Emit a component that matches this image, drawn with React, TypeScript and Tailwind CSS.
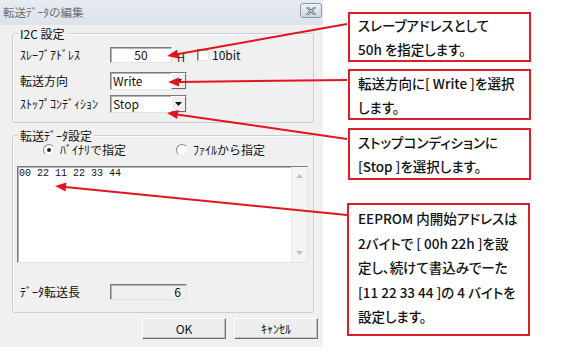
import React from "react";

const RED = "#e3141c";

function Arrow({ x1, y1, x2, y2 }: { x1: number; y1: number; x2: number; y2: number }) {
  const dx = x2 - x1;
  const dy = y2 - y1;
  const len = Math.hypot(dx, dy);
  const ux = dx / len;
  const uy = dy / len;
  const L = 11;
  const W = 4.5;
  const bx = x2 - ux * L;
  const by = y2 - uy * L;
  const p1 = `${bx - uy * W},${by + ux * W}`;
  const p2 = `${bx + uy * W},${by - ux * W}`;
  return (
    <g>
      <line x1={x1} y1={y1} x2={bx + ux * 1} y2={by + uy * 1} stroke={RED} strokeWidth={2} />
      <polygon points={`${x2},${y2} ${p1} ${p2}`} fill={RED} />
    </g>
  );
}

function Sunken({ className, children }: { className?: string; children?: React.ReactNode }) {
  return (
    <div
      className={
        "border border-t-[#7a7a7a] border-l-[#7a7a7a] border-r-[#e4e4e4] border-b-[#e4e4e4] shadow-[inset_1px_1px_0_#b4b4b4] " +
        (className ?? "")
      }
    >
      {children}
    </div>
  );
}

function Select({ value }: { value: string }) {
  return (
    <Sunken className="w-[77px] h-[18px] bg-white flex items-stretch">
      <div className="flex-1 flex items-center pl-[2px] text-[12px] leading-none text-[#111]">{value}</div>
      <div className="w-[15px] bg-[#f0f0f0] border border-t-white border-l-white border-r-[#6a6a6a] border-b-[#6a6a6a] flex items-center justify-center">
        <svg width="7" height="4" viewBox="0 0 7 4">
          <polygon points="0,0 7,0 3.5,4" fill="#111" />
        </svg>
      </div>
    </Sunken>
  );
}

function Radio({ checked }: { checked?: boolean }) {
  return (
    <div className="w-[12px] h-[12px] rounded-full border border-t-[#8a8a8a] border-l-[#8a8a8a] border-r-[#e8e8e8] border-b-[#e8e8e8] bg-white flex items-center justify-center">
      {checked && <div className="w-[4px] h-[4px] rounded-full bg-[#222]" />}
    </div>
  );
}

function Button({ children }: { children: React.ReactNode }) {
  return (
    <div className="w-[84px] h-[21px] bg-[#eeeeee] border border-t-white border-l-white border-r-[#6e6e6e] border-b-[#6e6e6e] shadow-[inset_-1px_-1px_0_#c4c4c4] flex items-center justify-center text-[12px] leading-none text-[#111]">
      {children}
    </div>
  );
}

export default function App() {
  return (
    <div
      className="relative w-[565px] h-[361px] bg-white flex overflow-hidden"
      style={{ fontFamily: '"Noto Sans CJK JP", "Noto Sans", sans-serif' }}
    >
      {/* Dialog */}
      <div className="w-[323px] h-[347px] bg-[#f0f0f0] flex flex-col">
        {/* Title bar */}
        <div className="h-[25px] bg-gradient-to-b from-[#e6ebf1] to-[#dce3ea] flex items-start justify-between pl-[3px] pr-[1px]">
          <span className="mt-[5px] text-[11.5px] leading-[14px] text-[#6e6e6e]">転送ﾃﾞｰﾀの編集</span>
          <div className="mt-[3px] w-[22px] h-[15px] rounded-[3px] border border-[#8d9aa8] bg-gradient-to-b from-[#eef2f6] to-[#ccd5de] flex items-center justify-center">
            <svg width="10" height="8" viewBox="0 0 10 8">
              <path d="M1.5 0.8 L8.5 7.2 M8.5 0.8 L1.5 7.2" stroke="#5c6b7b" strokeWidth="2.2" strokeLinecap="round" />
              <path d="M1.5 0.8 L8.5 7.2 M8.5 0.8 L1.5 7.2" stroke="#eef2f6" strokeWidth="0.8" strokeLinecap="round" />
            </svg>
          </div>
        </div>

        {/* Body */}
        <div className="pl-[12px] pt-[8px] flex flex-col text-[12px] text-[#111]">
          {/* Group 1 */}
          <div className="relative w-[302px] h-[90px] border border-[#c9ced4] rounded-[3px] shadow-[inset_1px_1px_0_#ffffff] pt-[13px] pl-[7px] flex flex-col">
            <span className="absolute -top-[8px] left-[5px] px-[2px] bg-[#f0f0f0] text-[12px] leading-[15px]">I2C 設定</span>
            <div className="flex items-center h-[16px]">
              <span className="w-[90px] leading-none">ｽﾚｰﾌﾞｱﾄﾞﾚｽ</span>
              <Sunken className="w-[62px] h-[16px] bg-white flex items-center justify-center">
                <span className="text-[12px] leading-none">50</span>
              </Sunken>
              <span className="ml-[5px] mt-[5px] text-[11px] leading-none">H</span>
              <Sunken className="ml-[12px] w-[12px] h-[12px] bg-white" />
              <span className="ml-[3px] leading-none">10bit</span>
            </div>
            <div className="flex items-center h-[18px] mt-[9px]">
              <span className="w-[90px] leading-none">転送方向</span>
              <Select value="Write" />
            </div>
            <div className="flex items-center h-[18px] mt-[5px]">
              <span className="w-[90px] leading-none">ｽﾄｯﾌﾟｺﾝﾃﾞｨｼｮﾝ</span>
              <Select value="Stop" />
            </div>
          </div>

          {/* Group 2 */}
          <div className="relative mt-[12px] w-[302px] h-[178px] border border-[#c9ced4] rounded-[3px] shadow-[inset_1px_1px_0_#ffffff] pt-[7px] flex flex-col">
            <span className="absolute -top-[8px] left-[5px] px-[2px] bg-[#f0f0f0] text-[12px] leading-[15px]">転送ﾃﾞｰﾀ設定</span>
            <div className="flex items-center h-[14px] pl-[30px]">
              <Radio checked />
              <span className="ml-[5px] leading-none">ﾊﾞｲﾅﾘで指定</span>
              <div className="ml-[50px]">
                <Radio />
              </div>
              <span className="ml-[5px] leading-none">ﾌｧｲﾙから指定</span>
            </div>
            <Sunken className="ml-[4px] mt-[9px] w-[291px] h-[97px] bg-white flex">
              <div
                className="flex-1 pl-[1px] pt-[1px] text-[10px] leading-[12px] text-[#111]"
                style={{ fontFamily: '"Liberation Mono", "DejaVu Sans Mono", monospace' }}
              >
                00 22 11 22 33 44
              </div>
              <div className="w-[16px] bg-[#f4f4f4] border-l border-[#ececec] flex flex-col items-center justify-between py-[7px]">
                <svg width="7" height="4" viewBox="0 0 7 4">
                  <polygon points="3.5,0 7,4 0,4" fill="#c2c2c2" />
                </svg>
                <svg width="7" height="4" viewBox="0 0 7 4">
                  <polygon points="0,0 7,0 3.5,4" fill="#c2c2c2" />
                </svg>
              </div>
            </Sunken>
            <div className="flex items-center h-[16px] mt-[21px] pl-[7px]">
              <span className="w-[90px] leading-none">ﾃﾞｰﾀ転送長</span>
              <Sunken className="w-[77px] h-[16px] bg-[#f0f0f0] flex items-center justify-end pr-[5px]">
                <span className="leading-none">6</span>
              </Sunken>
            </div>
          </div>
        </div>

        {/* Buttons */}
        <div className="mt-[5px] flex justify-end gap-[8px] pr-[5px]">
          <Button>OK</Button>
          <Button>ｷｬﾝｾﾙ</Button>
        </div>
      </div>

      {/* Callouts */}
      <div
        className="ml-[25px] pt-[12px] flex flex-col text-[13.5px] text-[#111] font-medium [font-feature-settings:'palt']"
      >
        <div className="w-[183px] h-[50px] border-2 border-[#dc1e26] pl-[8px] leading-[24px] flex flex-col justify-center">
          <span>スレーブアドレスとして</span>
          <span>50h を指定します。</span>
        </div>
        <div className="mt-[7px] w-[183px] h-[51px] border-2 border-[#dc1e26] pl-[8px] leading-[24px] flex flex-col justify-center">
          <span>転送方向に[ Write ]を選択</span>
          <span>します。</span>
        </div>
        <div className="mt-[8px] w-[183px] h-[52px] border-2 border-[#dc1e26] pl-[8px] leading-[24px] flex flex-col justify-center">
          <span>ストップコンディションに</span>
          <span>[Stop ]を選択します。</span>
        </div>
        <div className="mt-[23px] -ml-[1px] w-[183px] h-[133px] border-2 border-[#dc1e26] pl-[9px] pt-[1px] leading-[24.5px] flex flex-col">
          <span>EEPROM 内開始アドレスは</span>
          <span>2バイトで [ 00h 22h ]を設</span>
          <span>定し、続けて書込みでーた</span>
          <span>[11 22 33 44 ]の 4 バイトを</span>
          <span>設定します。</span>
        </div>
      </div>

      {/* Arrows overlay */}
      <svg className="absolute inset-0 pointer-events-none" width="565" height="361">
        <Arrow x1={347} y1={24} x2={167} y2={56} />
        <Arrow x1={347} y1={80} x2={168} y2={82} />
        <Arrow x1={347} y1={139} x2={167} y2={113} />
        <Arrow x1={347} y1={215} x2={55} y2={186} />
      </svg>
    </div>
  );
}
